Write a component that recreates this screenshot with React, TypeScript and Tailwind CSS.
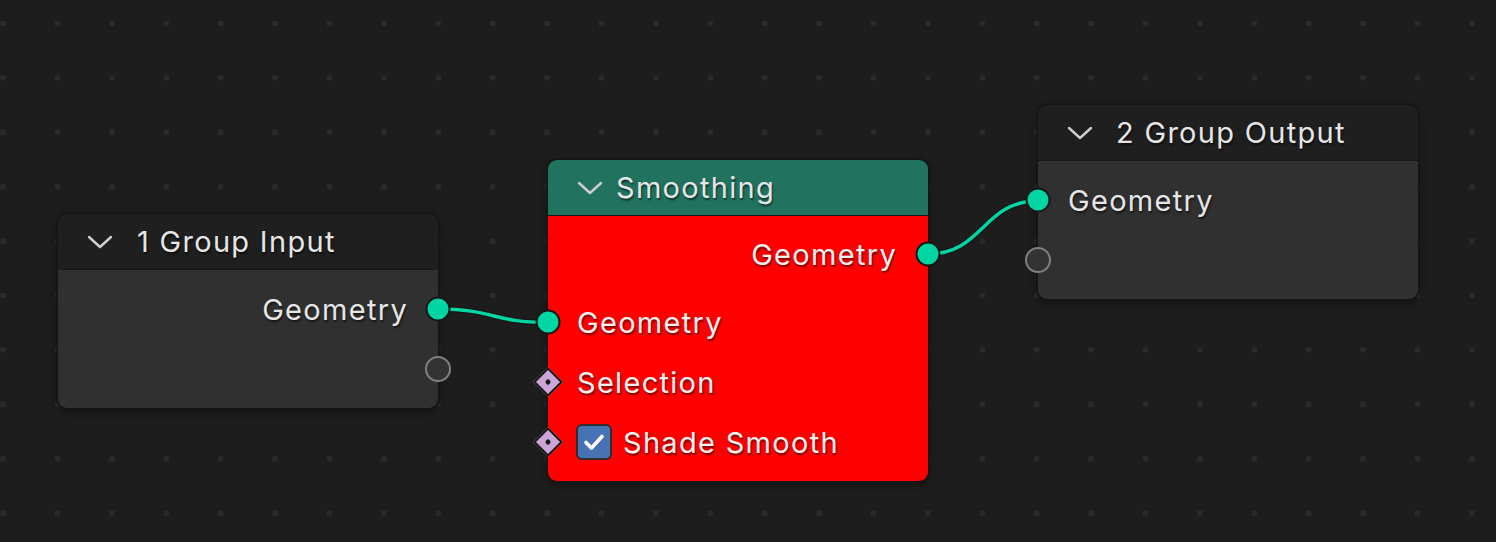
import type { ReactNode } from 'react';

const textCls = "font-['Inter',sans-serif] text-[29px] tracking-[1.3px] leading-none text-[#e6e6e6] [text-shadow:1px_2px_2px_rgba(0,0,0,0.55)] whitespace-nowrap";

function Chevron() {
  return (
    <svg width="26" height="14" viewBox="0 0 26 14" className="shrink-0">
      <path d="M2 2 L13 12 L24 2" fill="none" stroke="#cfcfcf" strokeWidth="2.4" strokeLinecap="round" strokeLinejoin="round" />
    </svg>
  );
}

function GeoSocket({ side }: { side: 'left' | 'right' }) {
  return (
    <span className={`absolute top-1/2 -translate-y-1/2 w-[25px] h-[25px] rounded-full bg-[#00d6a3] border-[2.5px] border-[#171717] ${side === 'left' ? 'left-0 -translate-x-1/2' : 'right-0 translate-x-1/2'}`} />
  );
}

function EmptySocket({ side }: { side: 'left' | 'right' }) {
  return (
    <span className={`absolute top-1/2 -translate-y-1/2 w-[26px] h-[26px] rounded-full bg-[#333333] border-[2.5px] border-[#808080] ${side === 'left' ? 'left-0 -translate-x-1/2' : 'right-0 translate-x-1/2'}`} />
  );
}

function FieldSocket() {
  return (
    <span className="absolute left-0 top-1/2 -translate-x-1/2 -translate-y-1/2 rotate-45 w-[21px] h-[21px] bg-[#cca6d6] border-2 border-[#171717] flex items-center justify-center">
      <span className="w-[5px] h-[5px] rounded-full bg-[#1a1a1a]" />
    </span>
  );
}

function Row({ children, className = '' }: { children: ReactNode; className?: string }) {
  return <div className={`relative h-[60px] flex items-center ${className}`}>{children}</div>;
}

function Node({ left, top, title, header, titleGap, children }: { left: string; top: string; title: string; header: string; titleGap: string; children: ReactNode }) {
  return (
    <div className={`absolute ${left} ${top} w-[380px] rounded-[9px] shadow-[0_0_0_1.5px_#151515,0_3px_10px_rgba(0,0,0,0.45)]`}>
      <div className={`h-[56px] rounded-t-[9px] ${header} border-b border-[#181818] flex items-center pl-[29px] ${titleGap}`}>
        <Chevron />
        <span className={textCls}>{title}</span>
      </div>
      {children}
    </div>
  );
}

export default function App() {
  return (
    <div className="relative w-[1496px] h-[542px] overflow-hidden bg-[#1d1d1d]">
      <svg className="absolute inset-0" width="1496" height="542">
        <defs>
          <pattern id="dots" x="0.6" y="21" width="54.4" height="54.4" patternUnits="userSpaceOnUse">
            <rect width="5" height="5" fill="#2b2b2b" />
          </pattern>
        </defs>
        <rect width="1496" height="542" fill="url(#dots)" />
        <g fill="none" strokeLinecap="round">
          <path d="M438.5 309 C493 309 493 322.5 547.5 322.5" stroke="#161616" strokeWidth="6" opacity="0.7" />
          <path d="M928 254 C983 254 983 201 1037.5 201" stroke="#161616" strokeWidth="6" opacity="0.7" />
          <path d="M438.5 309 C493 309 493 322.5 547.5 322.5" stroke="#00d6a3" strokeWidth="3.5" />
          <path d="M928 254 C983 254 983 201 1037.5 201" stroke="#00d6a3" strokeWidth="3.5" />
        </g>
      </svg>

      <Node left="left-[58px]" top="top-[214px]" title="1 Group Input" header="bg-[#1f1f1f]" titleGap="gap-[24px]">
        <div className="bg-[#303030] rounded-b-[9px] pt-[9px] pb-[9px]">
          <Row className="justify-end pr-[30px]">
            <span className={textCls}>Geometry</span>
            <GeoSocket side="right" />
          </Row>
          <Row>
            <EmptySocket side="right" />
          </Row>
        </div>
      </Node>

      <Node left="left-[548px]" top="top-[160px]" title="Smoothing" header="bg-[#217360]" titleGap="gap-[13px]">
        <div className="bg-[#ff0000] rounded-b-[9px] pt-[8px] pb-[9px]">
          <Row className="justify-end pr-[31px]">
            <span className={`${textCls} text-[#f2f2f2]`}>Geometry</span>
            <GeoSocket side="right" />
          </Row>
          <Row className="mt-[8px] pl-[29px]">
            <GeoSocket side="left" />
            <span className={`${textCls} text-[#f2f2f2]`}>Geometry</span>
          </Row>
          <Row className="pl-[29px]">
            <FieldSocket />
            <span className={`${textCls} text-[#f2f2f2]`}>Selection</span>
          </Row>
          <Row className="pl-[28px] gap-[11px]">
            <FieldSocket />
            <span className="w-[36px] h-[36px] rounded-[6px] bg-[#4772b3] border-2 border-[#2e2e2e] flex items-center justify-center">
              <svg width="22" height="18" viewBox="0 0 22 18">
                <path d="M3 9.5 L8.5 15 L19 3.5" fill="none" stroke="#ffffff" strokeWidth="3.6" strokeLinecap="round" strokeLinejoin="round" />
              </svg>
            </span>
            <span className={`${textCls} text-[#f2f2f2]`}>Shade Smooth</span>
          </Row>
        </div>
      </Node>

      <Node left="left-[1038px]" top="top-[105px]" title="2 Group Output" header="bg-[#1f1f1f]" titleGap="gap-[23px]">
        <div className="bg-[#303030] rounded-b-[9px] pt-[9px] pb-[9px]">
          <Row className="pl-[30px]">
            <GeoSocket side="left" />
            <span className={textCls}>Geometry</span>
          </Row>
          <Row>
            <EmptySocket side="left" />
          </Row>
        </div>
      </Node>
    </div>
  );
}
